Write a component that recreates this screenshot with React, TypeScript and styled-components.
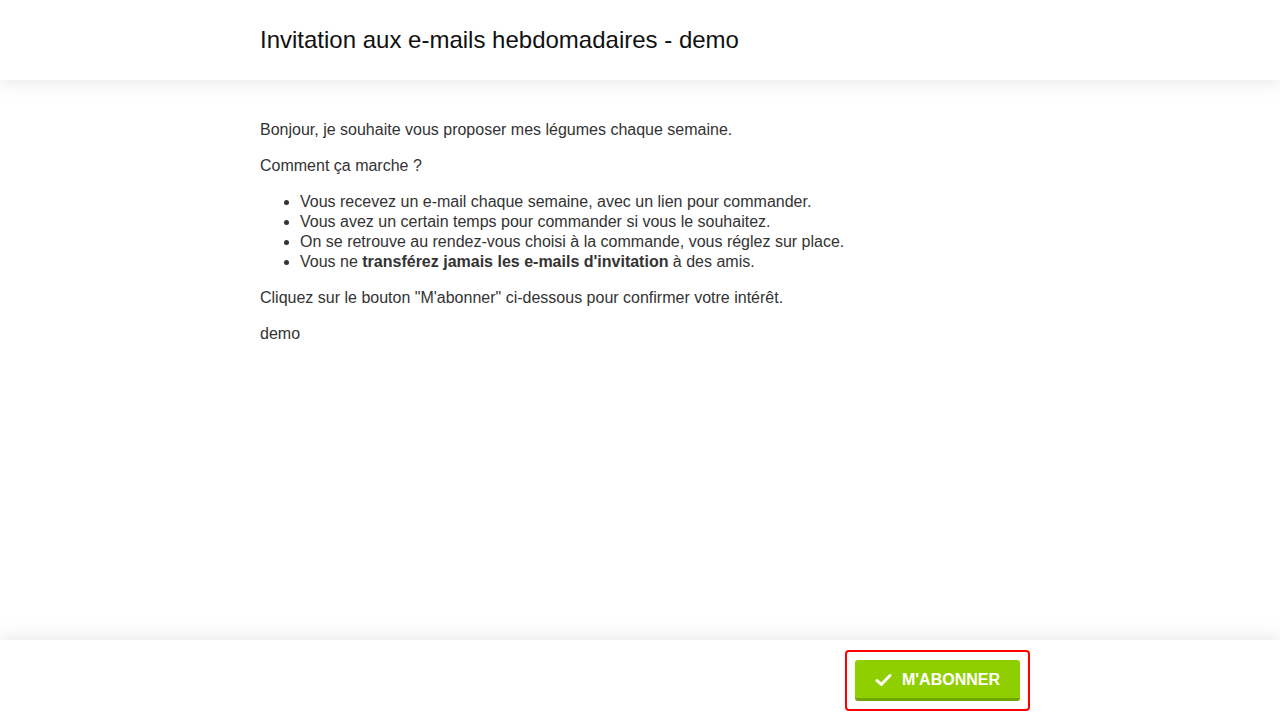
import React from "react";
import styled, { createGlobalStyle } from "styled-components";

const Global = createGlobalStyle`
  html, body { margin: 0; padding: 0; background: #fff; }
  body { font-family: "Liberation Sans", Arial, sans-serif; color: #333; }
  * { box-sizing: border-box; }
`;

const Page = styled.div`
  display: flex;
  flex-direction: column;
  height: 720px;
  overflow: hidden;
`;

const Header = styled.header`
  height: 80px;
  flex: none;
  background: #fff;
  box-shadow: 0 0 20px rgba(0, 0, 0, 0.12);
  position: relative;
  z-index: 1;
  display: flex;
  align-items: center;
`;

const Container = styled.div`
  width: 760px;
  margin: 0 auto;
`;

const Title = styled.h1`
  margin: 0;
  font-size: 24px;
  font-weight: 400;
  color: #111;
  line-height: 28px;
`;

const Main = styled.main`
  flex: 1;
  padding-top: 24px;
`;

const P = styled.p`
  margin: 16px 0;
  font-size: 16px;
  line-height: 20px;
`;

const List = styled.ul`
  margin: 16px 0;
  padding-left: 40px;
  font-size: 16px;
  line-height: 20px;
`;

const Footer = styled.footer`
  height: 80px;
  flex: none;
  background: #fff;
  box-shadow: 0 0 20px rgba(0, 0, 0, 0.12);
  display: flex;
  align-items: center;
`;

const FooterInner = styled(Container)`
  display: flex;
  justify-content: flex-end;
  padding-top: 1px;
`;

const FocusRing = styled.div`
  border: 2px solid #f00;
  border-radius: 4px;
  padding: 8px;
  margin-right: -10px;
  display: flex;
`;

const Button = styled.button`
  display: flex;
  align-items: center;
  gap: 10px;
  height: 41px;
  padding: 2px 20px 0;
  width: 165px;
  border: none;
  border-bottom: 3px solid #6fa600;
  border-radius: 3px;
  background: #8fcf00;
  color: #fff;
  font-family: "Liberation Sans", Arial, sans-serif;
  font-size: 16px;
  font-weight: 700;
  cursor: pointer;
`;

export default function App() {
  return (
    <Page>
      <Global />
      <Header>
        <Container>
          <Title>Invitation aux e-mails hebdomadaires - demo</Title>
        </Container>
      </Header>
      <Main>
        <Container>
          <P>Bonjour, je souhaite vous proposer mes légumes chaque semaine.</P>
          <P>Comment ça marche ?</P>
          <List>
            <li>Vous recevez un e-mail chaque semaine, avec un lien pour commander.</li>
            <li>Vous avez un certain temps pour commander si vous le souhaitez.</li>
            <li>On se retrouve au rendez-vous choisi à la commande, vous réglez sur place.</li>
            <li>
              Vous ne <strong>transférez jamais les e-mails d'invitation</strong> à des amis.
            </li>
          </List>
          <P>Cliquez sur le bouton "M'abonner" ci-dessous pour confirmer votre intérêt.</P>
          <P>demo</P>
        </Container>
      </Main>
      <Footer>
        <FooterInner>
          <FocusRing>
            <Button>
              <svg width="17" height="14" viewBox="0 0 17 14" aria-hidden="true">
                <path d="M2 7.5 L6.3 11.5 L15 2.5" fill="none" stroke="#fff" strokeWidth="3" strokeLinecap="round" strokeLinejoin="round" />
              </svg>
              M'ABONNER
            </Button>
          </FocusRing>
        </FooterInner>
      </Footer>
    </Page>
  );
}
